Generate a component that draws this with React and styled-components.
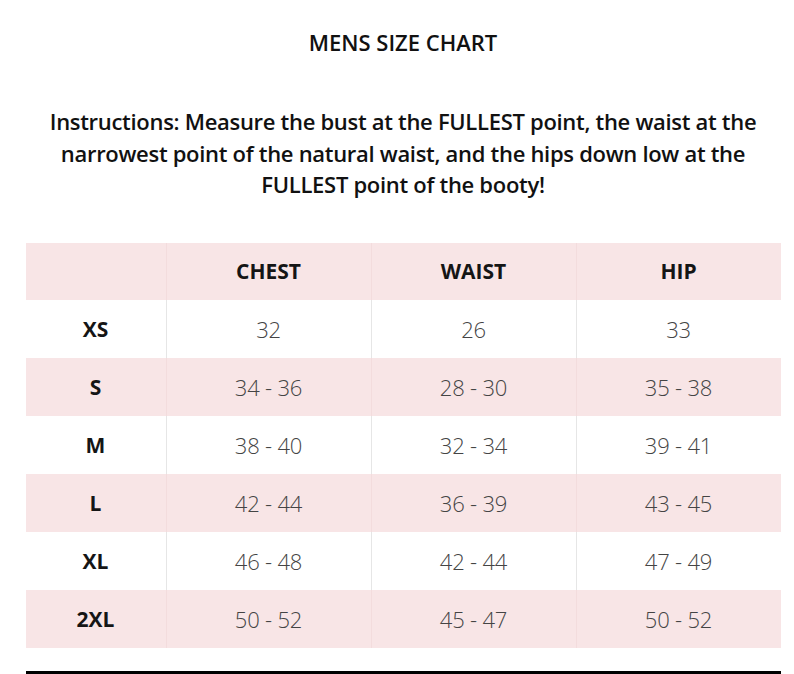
import React from 'react';
import styled, { createGlobalStyle } from 'styled-components';

const Global = createGlobalStyle`
  body {
    margin: 0;
    background: #fff;
    font-family: "Open Sans", "Noto Sans", sans-serif;
    color: #111;
  }
`

const Page = styled.div`
  box-sizing: border-box;
  width: 794px;
  height: 674px;
  padding-left: 12px;
  overflow: hidden;
  display: flex;
  flex-direction: column;
  align-items: center;
`
const Title = styled.h1`
  margin: 28px 0 0;
  font-size: 22px;
  font-weight: 600;
  letter-spacing: 0;
  line-height: 28px;
`
const Instructions = styled.p`
  margin: 50px 0 0;
  width: 760px;
  text-align: center;
  font-size: 22px;
  font-weight: 600;
  letter-spacing: -0.3px;
  line-height: 31.5px;
`
const Table = styled.div`
  margin-top: 42px;
  width: 755px;
  display: grid;
  grid-template-columns: 140px repeat(3, 1fr);
`
const Cell = styled.div`
  height: ${p => p.$head ? 57 : 58}px;
  display: flex;
  align-items: center;
  justify-content: center;
  background: ${p => p.$pink ? '#f8e5e6' : '#fff'};
  border-left: ${p => p.$first ? 'none' : `1px solid ${p.$pink ? '#f3dcdd' : '#e6e6e6'}`};
  font-size: ${p => p.$bold ? 21 : 22}px;
  font-weight: ${p => p.$bold ? 700 : 300};
  color: ${p => p.$bold ? '#151515' : '#444'};
  letter-spacing: ${p => p.$bold ? '0' : '-0.2px'};
`
const Rule = styled.div`
  margin-top: 23px;
  width: 755px;
  height: 5px;
  background: #000;
`

const rows = [
  ['XS', '32', '26', '33'],
  ['S', '34 - 36', '28 - 30', '35 - 38'],
  ['M', '38 - 40', '32 - 34', '39 - 41'],
  ['L', '42 - 44', '36 - 39', '43 - 45'],
  ['XL', '46 - 48', '42 - 44', '47 - 49'],
  ['2XL', '50 - 52', '45 - 47', '50 - 52'],
]

export default function App() {
  return (
    <Page>
      <Global />
      <Title>MENS SIZE CHART</Title>
      <Instructions>
        Instructions: Measure the bust at the FULLEST point, the waist at the<br />
        narrowest point of the natural waist, and the hips down low at the<br />
        FULLEST point of the booty!
      </Instructions>
      <Table>
        {['', 'CHEST', 'WAIST', 'HIP'].map((h, i) => (
          <Cell key={i} $head $pink $bold $first={i === 0}>{h}</Cell>
        ))}
        {rows.map((r, ri) => r.map((v, ci) => (
          <Cell key={`${ri}-${ci}`} $pink={ri % 2 === 1} $bold={ci === 0} $first={ci === 0}>{v}</Cell>
        )))}
      </Table>
      <Rule />
    </Page>
  )
}
